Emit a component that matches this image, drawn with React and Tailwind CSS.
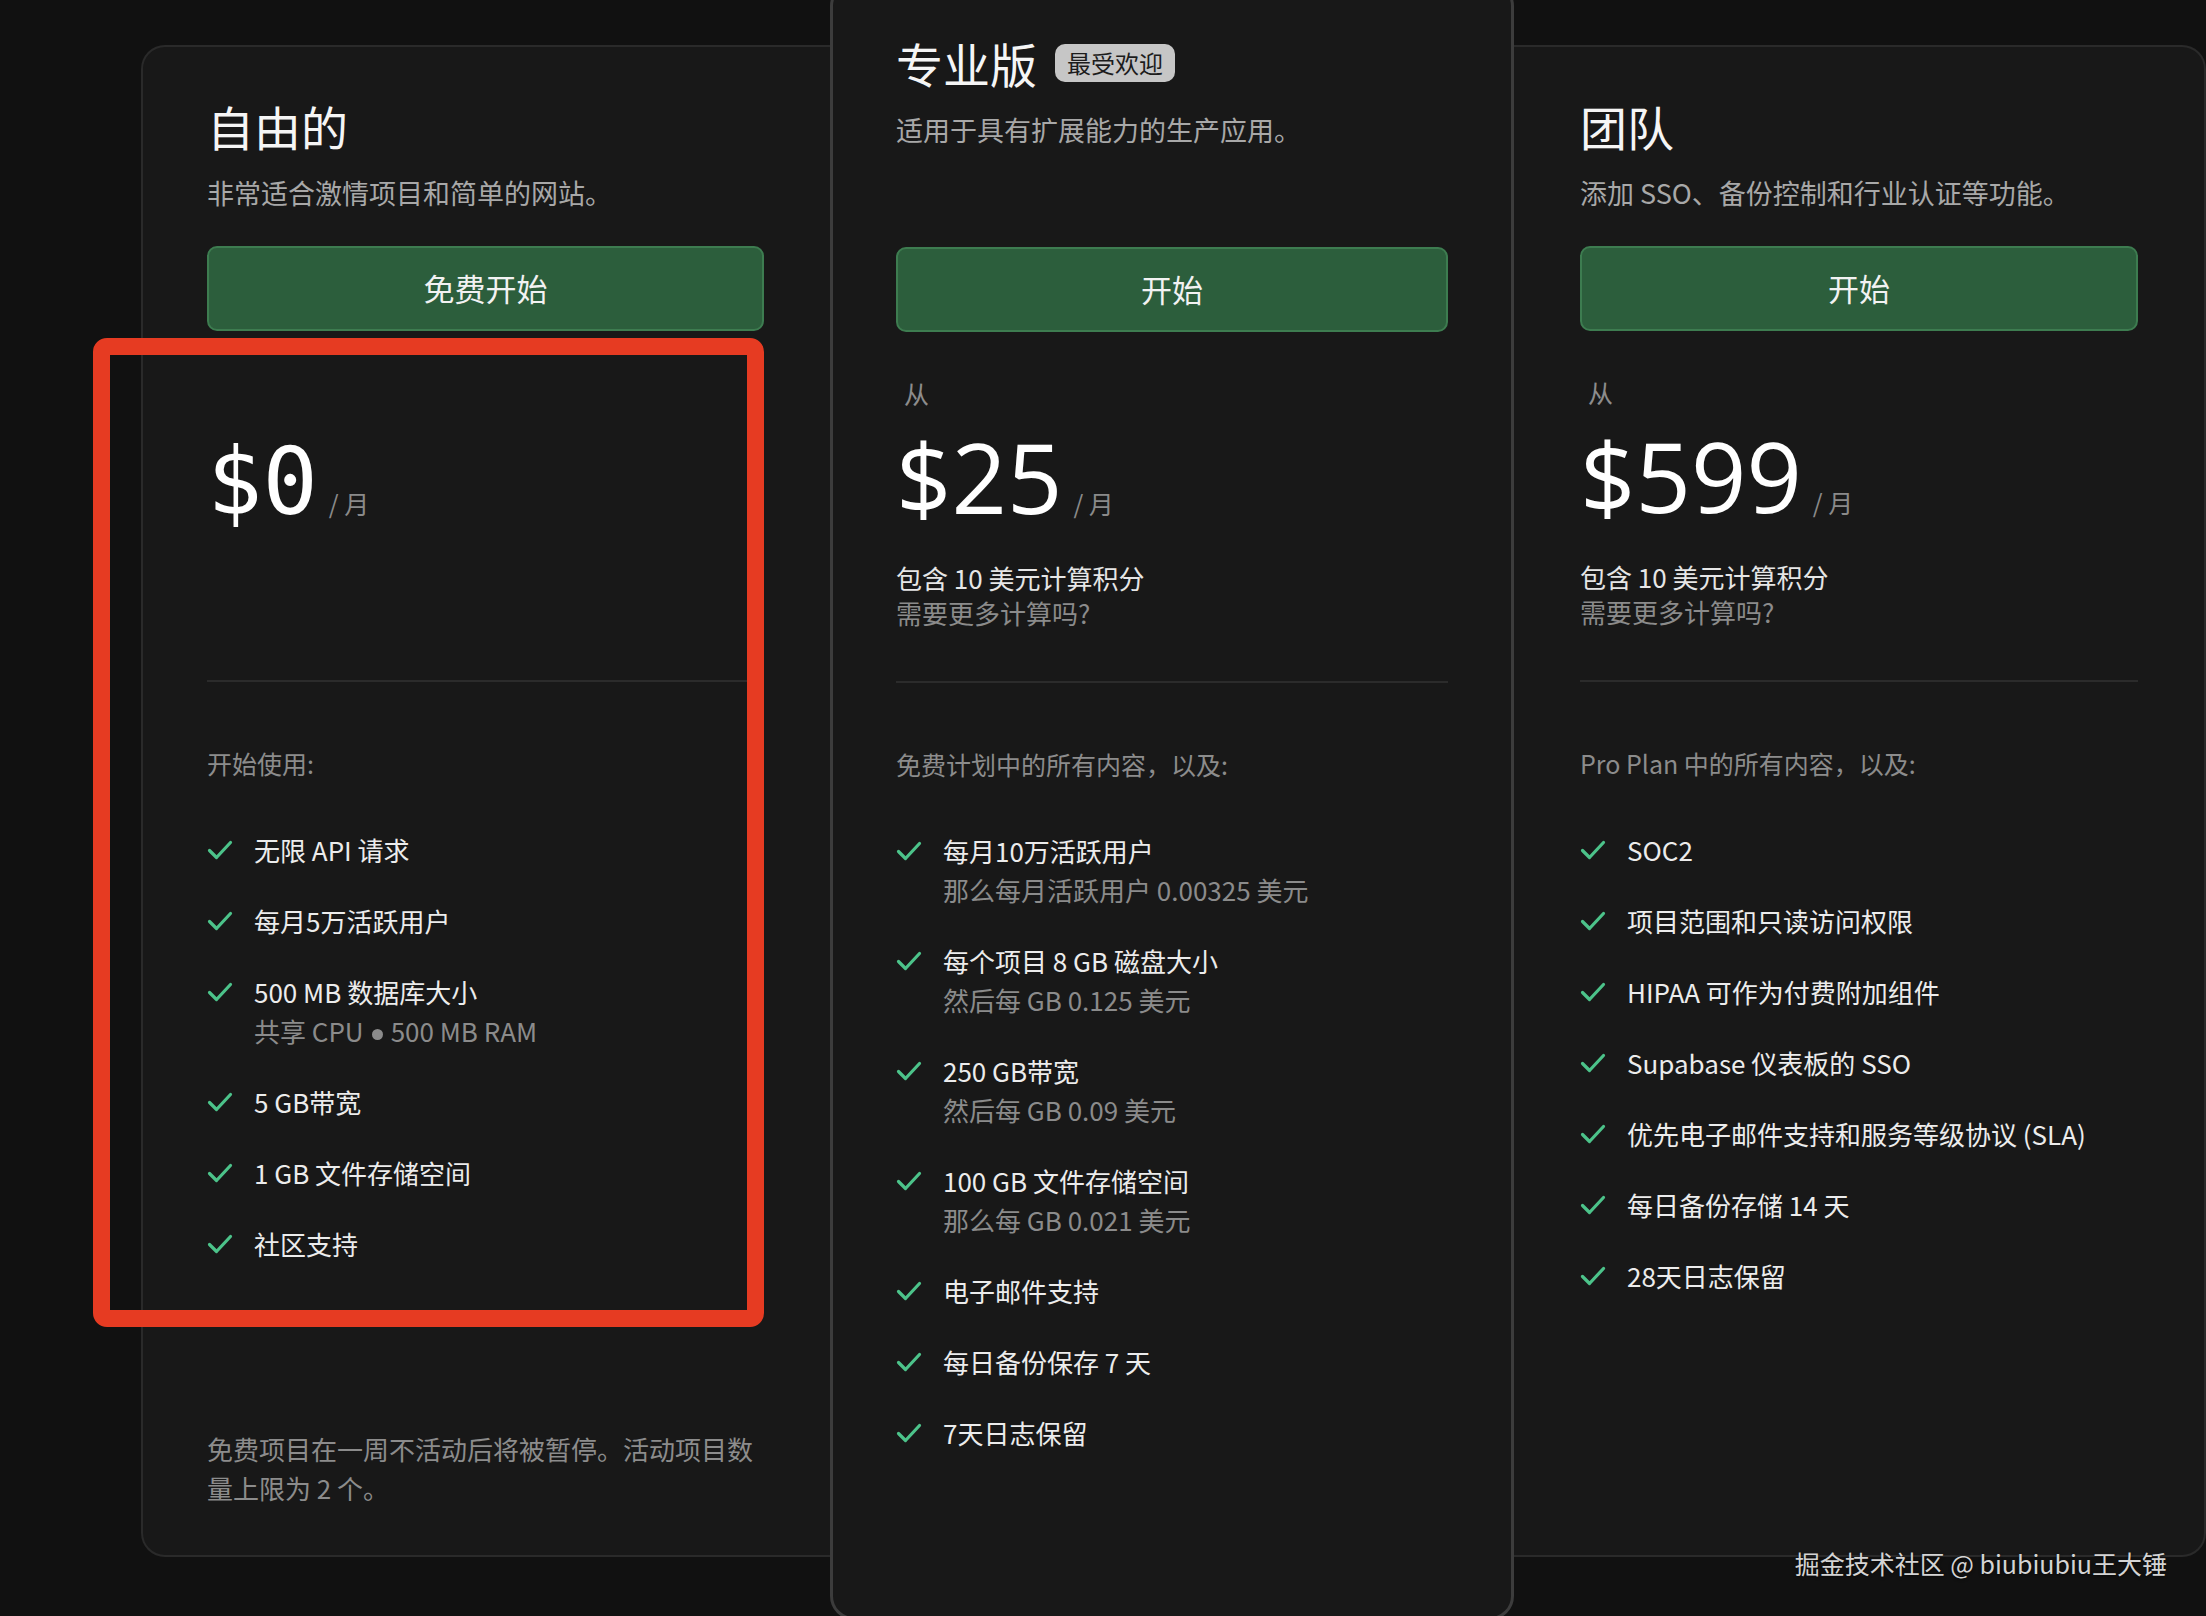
import React from 'react';

const PLANS = [
  {
    name: '自由的',
    desc: '非常适合激情项目和简单的网站。',
    cta: '免费开始',
    price: '$0',
    mono: true,
    label: '开始使用:',
    features: [
      { text: '无限 API 请求' },
      { text: '每月5万活跃用户' },
      { text: '500 MB 数据库大小', sub: ['共享 CPU', '500 MB RAM'] },
      { text: '5 GB带宽' },
      { text: '1 GB 文件存储空间' },
      { text: '社区支持' },
    ],
    note: '免费项目在一周不活动后将被暂停。活动项目数量上限为 2 个。',
  },
  {
    name: '专业版',
    badge: '最受欢迎',
    desc: '适用于具有扩展能力的生产应用。',
    cta: '开始',
    from: true,
    price: '$25',
    credits: true,
    label: '免费计划中的所有内容，以及:',
    features: [
      { text: '每月10万活跃用户', sub: '那么每月活跃用户 0.00325 美元' },
      { text: '每个项目 8 GB 磁盘大小', sub: '然后每 GB 0.125 美元' },
      { text: '250 GB带宽', sub: '然后每 GB 0.09 美元' },
      { text: '100 GB 文件存储空间', sub: '那么每 GB 0.021 美元' },
      { text: '电子邮件支持' },
      { text: '每日备份保存 7 天' },
      { text: '7天日志保留' },
    ],
  },
  {
    name: '团队',
    desc: '添加 SSO、备份控制和行业认证等功能。',
    cta: '开始',
    from: true,
    price: '$599',
    credits: true,
    label: 'Pro Plan 中的所有内容，以及:',
    features: [
      { text: 'SOC2' },
      { text: '项目范围和只读访问权限' },
      { text: 'HIPAA 可作为付费附加组件' },
      { text: 'Supabase 仪表板的 SSO' },
      { text: '优先电子邮件支持和服务等级协议 (SLA)' },
      { text: '每日备份存储 14 天' },
      { text: '28天日志保留' },
    ],
  },
];

function CheckIcon() {
  return (
    <svg width="26" height="22" viewBox="0 0 26 22" fill="none" className="shrink-0 mt-[9px]">
      <path d="M2.5 11.5 9.5 18.5 23.5 3.5" stroke="#4cc38a" strokeWidth="3.2" strokeLinecap="round" strokeLinejoin="round" />
    </svg>
  );
}

function Feature({ text, sub }) {
  return (
    <li className="flex items-start gap-[21px]">
      <CheckIcon />
      <div className="text-[26px] leading-[39px]">
        <p className="text-[#ececec]">{text}</p>
        {sub && (
          <p className="text-[#8b8b8b]">
            {Array.isArray(sub) ? (
              <>
                {sub[0]}
                <span className="inline-block w-[11px] h-[11px] mx-[8px] rounded-full bg-[#8b8b8b] align-middle" />
                {sub[1]}
              </>
            ) : (
              sub
            )}
          </p>
        )}
      </div>
    </li>
  );
}

function PlanCard({ plan, className, buttonGap }) {
  return (
    <div className={`flex flex-col shrink-0 bg-[#181818] ${className}`}>
      {/* Header */}
      <div className="flex items-center gap-[18px]">
        <h2 className="text-[47px] leading-[56px] text-[#f5f5f5]">{plan.name}</h2>
        {plan.badge && (
          <span className="h-[38px] px-[12px] flex items-center rounded-[10px] bg-[#c6c6c6] text-[#1c1c1c] text-[24px]">
            {plan.badge}
          </span>
        )}
      </div>
      <p className="mt-[19px] text-[27px] leading-[40px] text-[#a8a8a8]">{plan.desc}</p>
      <button
        className={`${buttonGap} h-[85px] w-full rounded-[10px] border-2 border-[#3d7c50] bg-[#2c5e3c] text-[31px] text-[#f2f2f2]`}
      >
        {plan.cta}
      </button>

      {/* Price */}
      <div className="h-[349px] pt-[50px]">
        <p className={`ml-[8px] text-[25px] leading-[22px] text-[#8c8c8c] ${plan.from ? '' : 'invisible'}`}>从</p>
        <div className={`${plan.mono ? 'mt-[34px]' : 'mt-[24px]'} h-[97px] flex items-baseline gap-[11px]`}>
          <span
            className={
              plan.mono
                ? "font-['DejaVu_Sans_Mono',monospace] text-[92px] leading-none text-white"
                : "font-['Open_Sans',sans-serif] text-[97px] leading-none text-white"
            }
          >
            {plan.price}
          </span>
          <span className="text-[25px] text-[#8a8a8a]">/ 月</span>
        </div>
        {plan.credits && (
          <div className="mt-[35px] text-[26px] leading-[35px]">
            <p className="text-[#e6e6e6]">包含 10 美元计算积分</p>
            <p className="text-[#8b8b8b]">需要更多计算吗?</p>
          </div>
        )}
      </div>
      <div className="h-[2px] bg-[#2b2b2b]" />

      {/* Features */}
      <p className="mt-[62px] text-[25px] leading-[38px] text-[#8c8c8c]">{plan.label}</p>
      <ul className="mt-[48px] flex flex-col gap-[32px]">
        {plan.features.map((f) => (
          <Feature key={f.text} {...f} />
        ))}
      </ul>
      {plan.note && <p className="mt-auto text-[26px] leading-[39px] text-[#8c8c8c]">{plan.note}</p>}
    </div>
  );
}

export default function App() {
  return (
    <div className="relative w-[2206px] h-[1616px] overflow-hidden bg-[#111111] font-['Noto_Sans_CJK_SC',sans-serif]">
      <div className="flex items-start pl-[141px]">
        <PlanCard
          plan={PLANS[0]}
          buttonGap="mt-[33px]"
          className="mt-[45px] w-[689px] h-[1512px] border-2 border-r-0 border-[#2a2a2a] rounded-l-[24px] pt-[51px] pl-[64px] pr-[66px] pb-[48px]"
        />
        <PlanCard
          plan={PLANS[1]}
          buttonGap="mt-[97px]"
          className="relative z-10 -mt-[18px] w-[684px] h-[1638px] border-[3px] border-[#3c3c3c] rounded-[24px] pt-[50px] px-[63px]"
        />
        <PlanCard
          plan={PLANS[2]}
          buttonGap="mt-[33px]"
          className="mt-[45px] w-[692px] h-[1512px] border-2 border-l-0 border-[#2a2a2a] rounded-r-[24px] pt-[51px] pl-[66px] pr-[66px]"
        />
      </div>

      {/* Highlight annotation */}
      <div className="absolute left-[93px] top-[338px] w-[671px] h-[989px] border-[17px] border-[#e63b22] rounded-[14px] z-20" />

      {/* Watermark */}
      <p className="absolute right-[39px] bottom-[34px] z-20 text-[25px] leading-[38px] text-[#d4d4d4] [text-shadow:0_1px_3px_rgba(0,0,0,0.6)]">
        掘金技术社区 @ biubiubiu王大锤
      </p>
    </div>
  );
}
